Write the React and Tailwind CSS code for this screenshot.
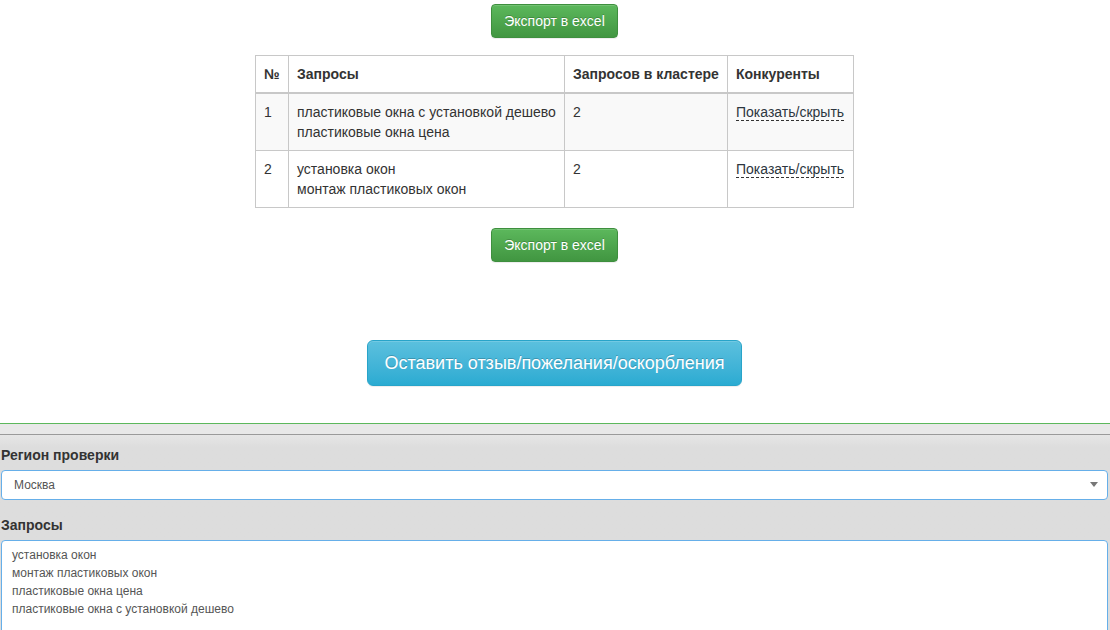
import React from "react";

const rows = [
  { n: 1, q: ["пластиковые окна с установкой дешево", "пластиковые окна цена"], c: 2 },
  { n: 2, q: ["установка окон", "монтаж пластиковых окон"], c: 2 },
];

function ExportButton() {
  return (
    <button className="h-[34px] w-[127px] rounded-[4px] border border-[#3e8f3e] bg-gradient-to-b from-[#5cb85c] to-[#419641] text-[14px] text-white [text-shadow:0_-1px_0_rgba(0,0,0,0.2)] shadow-[inset_0_1px_0_rgba(255,255,255,0.15),0_1px_1px_rgba(0,0,0,0.075)]">
      Экспорт в excel
    </button>
  );
}

export default function App() {
  return (
    <div className="w-[1110px] h-[630px] overflow-hidden bg-white text-[14px] leading-[20px] text-[#333] font-['Liberation_Sans',Arial,sans-serif]">
      <div className="flex flex-col items-center pt-[4px] pr-[1px]">
        <ExportButton />
        <table className="mt-[17px] border-collapse border border-[#c8c8c8] w-[599px]">
          <thead>
            <tr className="border-b-2 border-[#c8c8c8]">
              <th className="w-[33px] border border-[#c8c8c8] p-[8px] text-left font-bold">№</th>
              <th className="w-[276px] border border-[#c8c8c8] p-[8px] text-left font-bold">Запросы</th>
              <th className="w-[163px] border border-[#c8c8c8] p-[8px] text-left font-bold">Запросов в кластере</th>
              <th className="border border-[#c8c8c8] p-[8px] text-left font-bold">Конкуренты</th>
            </tr>
          </thead>
          <tbody>
            {rows.map((r, i) => (
              <tr key={r.n} className={i % 2 === 0 ? "bg-[#f9f9f9]" : "bg-white"}>
                <td className="border border-[#c8c8c8] p-[8px] align-top">{r.n}</td>
                <td className="border border-[#c8c8c8] p-[8px] align-top">
                  {r.q.map((t) => (
                    <div key={t}>{t}</div>
                  ))}
                </td>
                <td className="border border-[#c8c8c8] p-[8px] align-top">{r.c}</td>
                <td className="border border-[#c8c8c8] p-[8px] align-top">
                  <span className="border-b border-dashed border-[#333] text-[#2c3640]">Показать/скрыть</span>
                </td>
              </tr>
            ))}
          </tbody>
        </table>
        <div className="mt-[20px]">
          <ExportButton />
        </div>
        <button className="mt-[78px] h-[46px] w-[375px] rounded-[6px] border border-[#28a4c9] bg-gradient-to-b from-[#5bc0de] to-[#2aabd2] text-[18px] text-white [text-shadow:0_-1px_0_rgba(0,0,0,0.2)] shadow-[inset_0_1px_0_rgba(255,255,255,0.15),0_1px_1px_rgba(0,0,0,0.075)]">
          Оставить отзыв/пожелания/оскорбления
        </button>
      </div>

      <div className="mt-[37px] border-t border-[#5cb85c]">
        <div className="h-[10px] bg-[#e8e8e8]" />
        <div className="border-t border-[#9a9a9a] bg-gradient-to-b from-[#e6e6e6] to-[#dddddd] to-[12px] pb-[20px]">
          <div className="pt-[10px] px-[1px] pr-[2px]">
            <div className="font-bold leading-[20px]">Регион проверки</div>
            <div className="relative mt-[5px] h-[30px] rounded-[4px] border border-[#66afe9] bg-white flex items-center pl-[12px] text-[12px] text-[#555]">
              Москва
              <span className="absolute right-[9px] top-[11px] h-0 w-0 border-l-[4px] border-r-[4px] border-t-[5px] border-l-transparent border-r-transparent border-t-[#777]" />
            </div>
            <div className="mt-[15px] font-bold leading-[20px]">Запросы</div>
            <div className="mt-[5px] h-[120px] rounded-[4px] border border-[#66afe9] bg-white pl-[10px] pt-[5px] text-[12px] leading-[18px] text-[#555]">
              <div>установка окон</div>
              <div>монтаж пластиковых окон</div>
              <div>пластиковые окна цена</div>
              <div>пластиковые окна с установкой дешево</div>
            </div>
          </div>
        </div>
      </div>
    </div>
  );
}
